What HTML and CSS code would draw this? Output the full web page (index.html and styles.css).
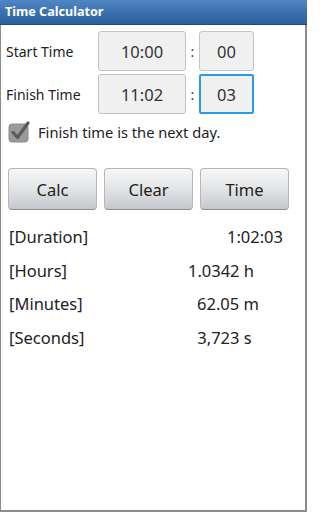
FILE: index.html
```html
<!DOCTYPE html>
<html>
<head>
<meta charset="utf-8">
<link rel="stylesheet" href="styles.css">
</head>
<body>
<div class="screen">
  <div class="titlebar">Time Calculator</div>
  <div class="content">
    <div class="timerow">
      <div class="label">Start Time</div>
      <div class="field hm">10:00</div>
      <div class="colon">:</div>
      <div class="field sec">00</div>
    </div>
    <div class="timerow second">
      <div class="label">Finish Time</div>
      <div class="field hm">11:02</div>
      <div class="colon">:</div>
      <div class="field sec focus">03</div>
    </div>
    <div class="checkrow">
      <div class="checkbox">
        <svg width="22" height="22" viewBox="0 0 22 22">
          <rect x="1" y="3" width="19" height="18" rx="3" fill="#9a9a9a" stroke="#8a8a8a" stroke-width="1"/>
          <path d="M5 11.5 L9.5 16.5 L20 2" fill="none" stroke="#5c5c5c" stroke-width="3.2" stroke-linecap="round" stroke-linejoin="round"/>
        </svg>
      </div>
      <div class="checktext">Finish time is the next day.</div>
    </div>
    <div class="buttons">
      <div class="btn">Calc</div>
      <div class="btn">Clear</div>
      <div class="btn">Time</div>
    </div>
    <div class="results">
      <div class="rlabel">[Duration]</div><div class="rval right">1:02:03</div>
      <div class="rlabel">[Hours]</div><div class="rval">1.0342 h</div>
      <div class="rlabel">[Minutes]</div><div class="rval m">62.05 m</div>
      <div class="rlabel">[Seconds]</div><div class="rval s">3,723 s</div>
    </div>
  </div>
</div>
</body>
</html>
```
FILE: styles.css
```css
html, body {
  margin: 0;
  padding: 0;
  background: #fff;
}
body {
  font-family: "Noto Sans", "Open Sans", "DejaVu Sans", sans-serif;
  color: #222;
}
.screen {
  width: 307px;
  height: 512px;
  box-sizing: border-box;
  display: flex;
  flex-direction: column;
  border-bottom: 2px solid #8c8c8c;
  overflow: hidden;
}
.titlebar {
  height: 25px;
  box-sizing: border-box;
  background: linear-gradient(#4f86c4, #3a6fae 55%, #2c5f9c);
  border-bottom: 1px solid #1f4a7e;
  color: #fff;
  font-weight: bold;
  font-size: 12.6px;
  line-height: 24px;
  padding-left: 5px;
}
.content {
  flex: 1;
  border-left: 1px solid #8c8c8c;
  border-right: 2px solid #8c8c8c;
  padding: 6px 0 0 5px;
}
.timerow {
  display: flex;
  align-items: center;
  height: 40px;
}
.timerow.second {
  margin-top: 3px;
}
.label {
  width: 92px;
  font-size: 14px;
  color: #222;
}
.field {
  height: 40px;
  box-sizing: border-box;
  background: #f0f0f0;
  border: 1px solid #c4c4c4;
  border-radius: 3px;
  font-size: 16.5px;
  color: #333;
  display: flex;
  align-items: center;
  justify-content: center;
}
.hm { width: 88px; }
.colon {
  width: 13px;
  text-align: center;
  font-size: 14px;
  color: #444;
}
.sec { width: 55px; }
.focus {
  border: 2px solid #2a9be8;
  border-radius: 2px;
}
.checkrow {
  display: flex;
  align-items: center;
  margin-top: 6px;
  height: 24px;
}
.checkbox {
  width: 22px;
  height: 22px;
  margin-left: 2px;
}
.checktext {
  margin-left: 8px;
  font-size: 14.7px;
  color: #222;
}
.buttons {
  display: flex;
  gap: 7px;
  margin-top: 24px;
  padding-left: 2px;
}
.btn {
  width: 89px;
  height: 42px;
  box-sizing: border-box;
  border: 1px solid #b5b7ba;
  border-bottom-color: #8e9195;
  border-radius: 4px;
  background: linear-gradient(#f6f7f8, #e2e4e6 50%, #c5c8cc);
  font-size: 16.5px;
  color: #222;
  display: flex;
  align-items: center;
  justify-content: center;
}
.results {
  display: grid;
  grid-template-columns: 150px 124px;
  grid-auto-rows: 33.5px;
  margin-top: 10px;
  padding-left: 3px;
  align-items: center;
  font-size: 16.5px;
  color: #222;
}
.rval {
  text-align: center;
}
.rval.right {
  text-align: right;
}
.rval.m {
  padding-left: 14px;
}
.rval.s {
  padding-left: 7px;
}
```
